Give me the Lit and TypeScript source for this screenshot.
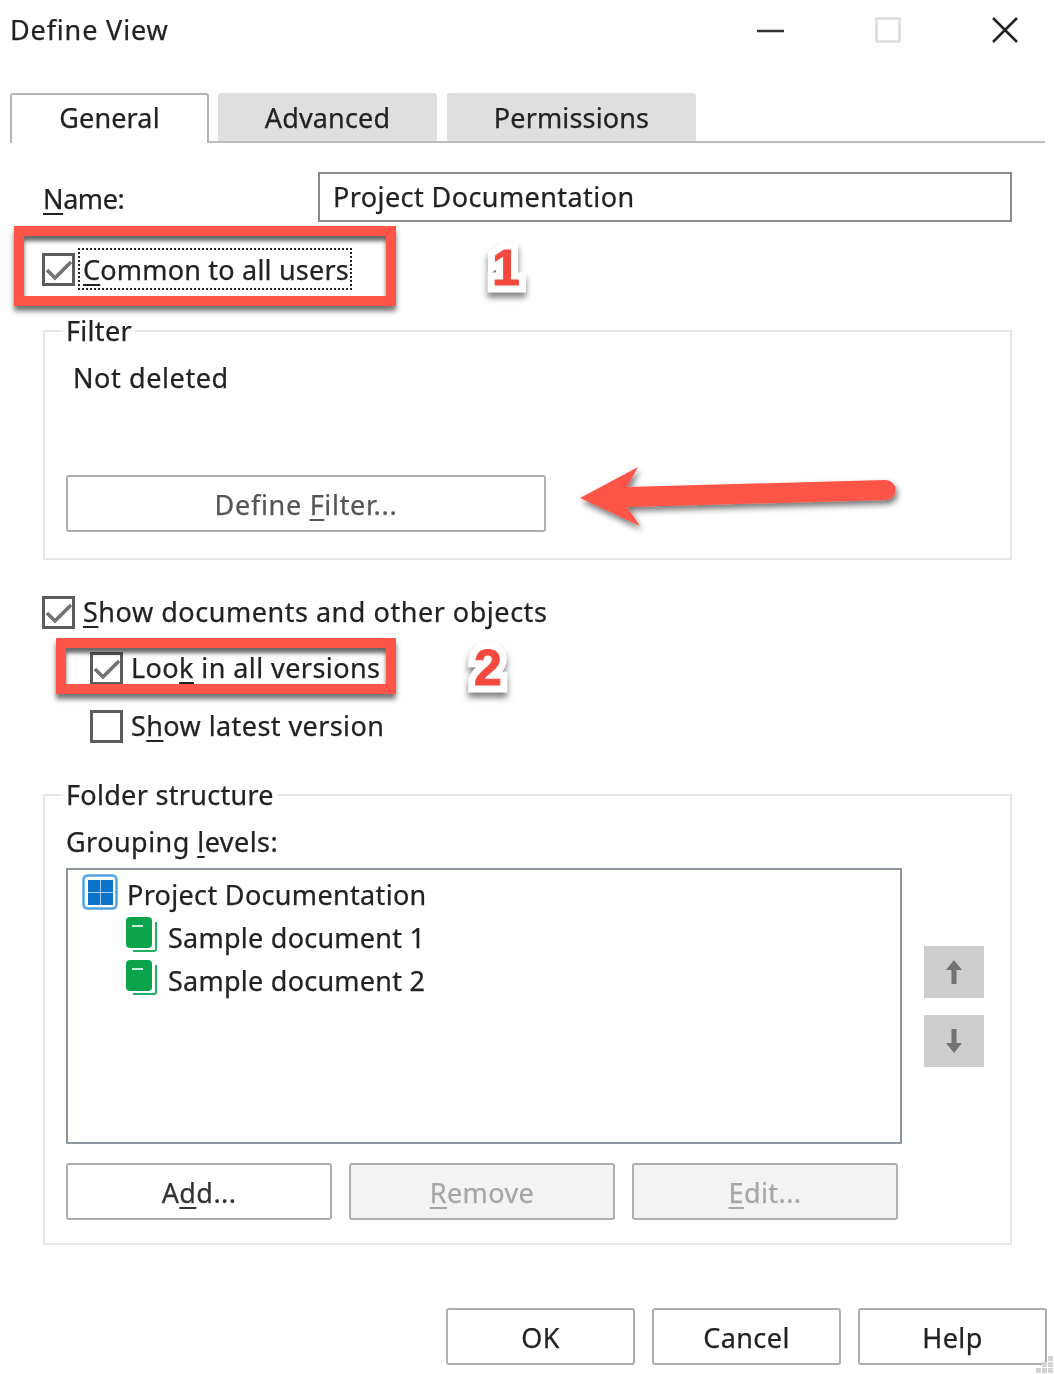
import { LitElement, html, css, svg } from "lit";
import { customElement } from "lit/decorators.js";

const check = svg`<path d="M5 17 L13 25 L29 9" fill="none" stroke="#727272" stroke-width="3.6"/>`;

@customElement("app-root")
export class AppRoot extends LitElement {
  static styles = css`
    :host { display: block; width: 1054px; height: 1374px; }
    .dialog {
      position: relative; width: 1054px; height: 1374px; overflow: hidden; background: #fff;
      display: flex; flex-direction: column; box-sizing: border-box;
      font-family: "Noto Sans", "Open Sans", sans-serif; font-size: 27px; line-height: 36px; color: #222;
      letter-spacing: 0.42px; -webkit-text-stroke: 0.25px currentColor;
    }
    .content { display: flex; flex-direction: column; filter: blur(0.45px); }
    .u { text-decoration: underline; text-underline-offset: 4px; text-decoration-thickness: 2px; }
    .titlebar { height: 62px; display: flex; align-items: center; padding-left: 10px; }
    .title { letter-spacing: 0.85px; margin-top: -2px; }
    .winctl { margin: -3px 0 0 auto; display: flex; align-items: center; padding-right: 35px; gap: 90px; }
    .winctl svg { display: block; }
    .minimize { margin-top: 2px; }
    .tabs {
      margin: 31px 0 0 10px; width: 1035px; height: 48px;
      border-bottom: 2px solid #bcbcbc; display: flex; box-sizing: content-box;
    }
    .tab {
      box-sizing: border-box; height: 48px; margin-right: 10px; background: #dfdfdf;
      border-radius: 3px 3px 0 0; display: flex; align-items: center; justify-content: center;
      letter-spacing: 0.15px; padding-top: 2px;
    }
    .tab.active {
      height: 50px; margin-right: 9px; background: #fff; border: 2px solid #b4b4b4; border-bottom: 0;
      padding: 0 0 2px;
    }
    .body { display: flex; flex-direction: column; padding-left: 43px; width: 969px; }
    .name-row { margin-top: 29px; height: 50px; display: flex; }
    .name-label { width: 275px; line-height: 54px; letter-spacing: -0.4px; }
    .input {
      flex: 1; box-sizing: border-box; border: 2px solid #8a8a8a; padding-left: 13px; line-height: 46px; height: 50px;
    }
    .check-row { display: flex; align-items: center; height: 36px; gap: 8px; }
    .box { width: 33px; height: 33px; margin-left: -1px; box-sizing: border-box; border: 3px solid #5c5c5c; flex: none; background: #fff; }
    .box svg { display: block; margin: -3px; width: 33px; height: 33px; }
    .focus { outline: 2px dotted #222; line-height: 36px; margin-left: -3px; padding: 2px 1px 0 3px; letter-spacing: 0.2px; }
    .common { margin-top: 28px; height: 38px; }
    .indent { margin-left: 48px; }
    fieldset { margin: 0; padding: 0 0 0 21px; border: 2px solid #e6e6e6; min-width: 0; display: block; }
    legend { margin-left: -3px; padding: 0 3px; line-height: 36px; letter-spacing: 0.3px; }
    .filter { margin-top: 25px; padding-bottom: 26px; padding-right: 21px; }
    .not-deleted { margin: 11px 0 79px 7px; letter-spacing: 0.6px; }
    .btn {
      box-sizing: border-box; height: 57px; border: 2px solid #adadad; border-radius: 3px; background: #fff;
      display: flex; align-items: center; justify-content: center; color: #333; padding-top: 2px;
    }
    .btn.off { background: #f3f3f3; color: #a6a6a6; }
    .define { width: 480px; color: #555; letter-spacing: 0.7px; }
    .show { margin-top: 34px; letter-spacing: 0.53px; }
    .look { margin-top: 20px; }
    .latest { margin-top: 22px; }
    .folder { margin-top: 33px; padding-bottom: 23px; }
    .grouping { margin-top: 11px; letter-spacing: 0.45px; }
    .list-row { margin-top: 8px; display: flex; }
    .list {
      box-sizing: border-box; width: 836px; height: 276px; border: 2px solid #8d95a0; padding: 3px 0 0 14px;
      display: flex; flex-direction: column;
    }
    .tree { display: flex; align-items: center; height: 43px; gap: 9px; letter-spacing: 0.33px; }
    .tree.child { padding-left: 44px; gap: 10px; letter-spacing: 0.25px; }
    .tree svg { margin-top: -6px; flex: none; }
    .movers { margin: 78px 0 0 22px; display: flex; flex-direction: column; gap: 17px; }
    .mover { width: 60px; height: 52px; background: #cdcdcd; display: flex; align-items: center; justify-content: center; }
    .list-btns { margin-top: 19px; display: flex; gap: 17px; }
    .list-btns .btn { width: 266px; }
    .footer { margin: 63px 0 0 446px; display: flex; gap: 17px; }
    .footer .btn { width: 189px; color: #222; }
    .overlay { position: absolute; }
    .rect { box-sizing: border-box; border: 10px solid #ff5549;
      box-shadow: 0 5px 5px rgba(0,0,0,.55), inset 0 5px 4px rgba(0,0,0,.6); }
    .r1 { left: 14px; top: 226px; width: 382px; height: 80px; }
    .r2 { left: 56px; top: 638px; width: 340px; height: 56px; }
    .num {
      font-family: "Liberation Sans", sans-serif; font-weight: 700; font-size: 50px; line-height: 50px;
      color: #f5493f; -webkit-text-stroke: 15px #fff; letter-spacing: 0;
      filter: drop-shadow(0 5px 3px rgba(0,0,0,.5));
    }
    .num::after {
      content: attr(data-n); position: absolute; left: 0; top: 0;
      -webkit-text-stroke: 1px #f5493f;
    }
    .n1 { left: 492px; top: 243px; }
    .n2 { left: 474px; top: 643px; }
    .arrow { left: 570px; top: 455px; }
    .grip { right: 0; bottom: 0; }
  `;

  private checkBox(on: boolean) {
    return html`<span class="box">${on ? html`<svg viewBox="0 0 33 33">${check}</svg>` : ""}</span>`;
  }

  private book() {
    return html`<svg width="32" height="36" viewBox="0 0 32 36">
      <path d="M30 5V32a2 2 0 0 1-2 2H7" fill="none" stroke="#22b060" stroke-width="2"/>
      <rect x="0" y="0" width="26" height="31" rx="4" fill="#0ba34b"/>
      <rect x="6" y="8" width="11" height="2" fill="#c8ecd6"/>
    </svg>`;
  }

  render() {
    return html`<div class="dialog">
      <div class="content">
        <div class="titlebar">
          <span class="title">Define View</span>
          <div class="winctl">
            <svg class="minimize" width="28" height="28" viewBox="0 0 28 28"><path d="M0 14h27" stroke="#333" stroke-width="2.5"/></svg>
            <svg width="26" height="26" viewBox="0 0 26 26"><rect x="1.5" y="1.5" width="23" height="23" fill="none" stroke="#dcdcdc" stroke-width="2.5"/></svg>
            <svg width="28" height="28" viewBox="0 0 28 28"><path d="M2 2L26 26M26 2L2 26" stroke="#222" stroke-width="2.5"/></svg>
          </div>
        </div>
        <div class="tabs">
          <div class="tab active" style="width:199px">General</div>
          <div class="tab" style="width:219px">Advanced</div>
          <div class="tab" style="width:249px">Permissions</div>
        </div>
        <div class="body">
          <div class="name-row">
            <span class="name-label"><span class="u">N</span>ame:</span>
            <div class="input">Project Documentation</div>
          </div>
          <div class="check-row common">
            ${this.checkBox(true)}<span class="focus"><span class="u">C</span>ommon to all users</span>
          </div>
          <fieldset class="filter">
            <legend>Filter</legend>
            <div class="not-deleted">Not deleted</div>
            <div class="btn define">Define&nbsp;<span class="u">F</span>ilter...</div>
          </fieldset>
          <div class="check-row show">${this.checkBox(true)}<span><span class="u">S</span>how documents and other objects</span></div>
          <div class="check-row look indent">${this.checkBox(true)}<span>Loo<span class="u">k</span> in all versions</span></div>
          <div class="check-row latest indent">${this.checkBox(false)}<span>S<span class="u">h</span>ow latest version</span></div>
          <fieldset class="folder">
            <legend>Folder structure</legend>
            <div class="grouping">Grouping <span class="u">l</span>evels:</div>
            <div class="list-row">
              <div class="list">
                <div class="tree">
                  <svg width="36" height="36" viewBox="0 0 36 36">
                    <rect x="1.5" y="1.5" width="33" height="33" rx="4" fill="#fff" stroke="#4fa3e3" stroke-width="2.5"/>
                    <rect x="6" y="6" width="25" height="25" fill="#a8cdee"/>
                    <rect x="6" y="6" width="12" height="12" fill="#0a74cc"/><rect x="19" y="6" width="12" height="12" fill="#0a74cc"/>
                    <rect x="6" y="19" width="12" height="12" fill="#0a74cc"/><rect x="19" y="19" width="12" height="12" fill="#0a74cc"/>
                  </svg>
                  <span>Project Documentation</span>
                </div>
                <div class="tree child">${this.book()}<span>Sample document 1</span></div>
                <div class="tree child">${this.book()}<span>Sample document 2</span></div>
              </div>
              <div class="movers">
                <div class="mover"><svg width="20" height="26" viewBox="0 0 20 26"><path d="M10 1L18 11H12.5V25H7.5V11H2Z" fill="#727272"/></svg></div>
                <div class="mover"><svg width="20" height="26" viewBox="0 0 20 26"><path d="M10 25L18 15H12.5V1H7.5V15H2Z" fill="#727272"/></svg></div>
              </div>
            </div>
            <div class="list-btns">
              <div class="btn">A<span class="u">d</span>d...</div>
              <div class="btn off"><span class="u">R</span>emove</div>
              <div class="btn off"><span class="u">E</span>dit...</div>
            </div>
          </fieldset>
        </div>
        <div class="footer">
          <div class="btn">OK</div>
          <div class="btn">Cancel</div>
          <div class="btn">Help</div>
        </div>
      </div>

      <div class="overlay rect r1"></div>
      <div class="overlay rect r2"></div>
      <div class="overlay num n1" data-n="1">1</div>
      <div class="overlay num n2" data-n="2">2</div>
      <svg class="overlay arrow" width="340" height="90" viewBox="570 455 340 90">
        <defs><filter id="s" x="-10%" y="-30%" width="120%" height="160%"><feDropShadow dx="2" dy="4" stdDeviation="3" flood-color="#000" flood-opacity=".55"/></filter></defs>
        <path d="M580 498L638 467L627 487L885 480A10 10 0 0 1 886 500L627 507L640 526Z" fill="#ff5549" filter="url(#s)"/>
      </svg>
      <svg class="overlay grip" width="20" height="20" viewBox="0 0 20 20">
        <g fill="#d4d4d4"><rect x="14" y="2" width="5" height="5"/><rect x="8" y="8" width="5" height="5"/><rect x="14" y="8" width="5" height="5"/><rect x="2" y="14" width="5" height="5"/><rect x="8" y="14" width="5" height="5"/><rect x="14" y="14" width="5" height="5"/></g>
      </svg>
    </div>`;
  }
}
